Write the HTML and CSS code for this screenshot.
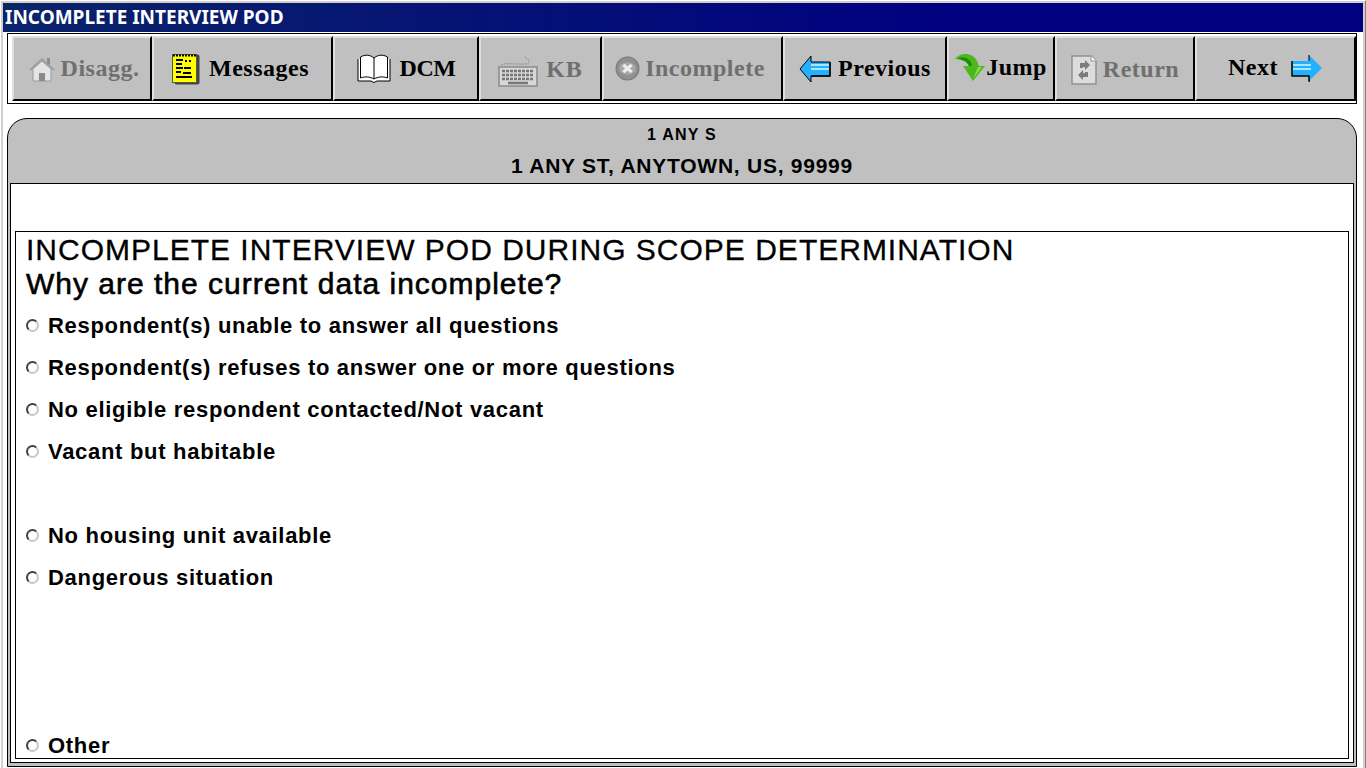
FILE: index.html
```html
<!DOCTYPE html>
<html lang="en">

<head>
  <meta charset="UTF-8">
  <title>INCOMPLETE INTERVIEW POD</title>
  <link rel="stylesheet" href="styles.css">
</head>

<body>
  <div class="window">
    <div class="titlebar">INCOMPLETE INTERVIEW POD</div>
    <div class="content">
      <div class="toolbar">
        <button class="btn btn-disagg off">
          <svg width="26" height="26" viewBox="0 0 26 26">
            <path d="M18 2h3v9h-3z" fill="#8c8c8c"/>
            <path d="M4 13v12h18V13L13 5z" fill="#e4e4e4" stroke="#999"/>
            <path d="M1 14L13 3l12 11" fill="none" stroke="#a0a0a0" stroke-width="2"/>
            <path d="M10 17h6v8h-6z" fill="#8a8a8a"/>
          </svg>
          <span>Disagg.</span>
        </button>
        <button class="btn btn-messages">
          <svg width="28" height="32" viewBox="0 0 28 32">
            <rect x="2.500" y="1.500" width="25" height="30" rx="2" fill="#444"/>
            <rect x="0.500" y="1.500" width="24" height="28" fill="#ffff00" stroke="#555"/>
            <path d="M1 2.500h23" stroke="#000" stroke-width="2" stroke-dasharray="2 1"/>
            <path d="M4 7h7M13 8h2M17 8h2M4 11h6M4 15h7M12 15h7M4 19h5M11 20h8M4 24h16" stroke="#000" stroke-width="2"/>
          </svg>
          <span>Messages</span>
        </button>
        <button class="btn btn-dcm">
          <svg width="34" height="29" viewBox="0 0 34 29">
            <path d="M1 5v22h13l3 1.500 3-1.500h13V5" fill="#fff" stroke="#000"/>
            <path d="M3.500 24V3c5-3 10-2 13.500 1 3.500-3 8.500-4 13.500-1v21c-5-2-10-1-13.500 1-3.500-2-8.500-3-13.500-1z" fill="#fff" stroke="#000"/>
            <path d="M17 4v21" stroke="#000"/>
          </svg>
          <span>DCM</span>
        </button>
        <button class="btn btn-kb off">
          <svg width="40" height="36" viewBox="0 0 40 36">
            <path d="M3 13C6 11 12 12 20 12c6 0 11 1 11-3 0-2-4-2-4-5" fill="none" stroke="#8a8a8a" stroke-dasharray="2 1"/>
            <rect x="1" y="15" width="38" height="19" fill="#d8d8d8" stroke="#8a8a8a" stroke-width="1.500"/>
            <path d="M4 19h32M4 23h32M4 27h32" stroke="#777" stroke-width="2.500" stroke-dasharray="3 1"/>
            <path d="M10 31h20" stroke="#777" stroke-width="2.500"/>
          </svg>
          <span>KB</span>
        </button>
        <button class="btn btn-incomplete off">
          <svg width="25" height="25" viewBox="0 0 24 24">
            <circle cx="12" cy="12" r="11" fill="#8f8f8f" stroke="#777"/>
            <ellipse cx="12" cy="12" rx="8" ry="6" fill="#a8a8a8"/>
            <path d="M8 8.500l8 7M16 8.500l-8 7" stroke="#eee" stroke-width="3"/>
          </svg>
          <span>Incomplete</span>
        </button>
        <button class="btn btn-previous">
          <svg width="32" height="28" viewBox="0 0 32 28">
            <path d="M12 1L1 14l11 13v-6h19V7H12z" fill="#22b0ff" stroke="#000"/>
            <path d="M12 10h18M12 14h18" stroke="#a8e6ff" stroke-width="2"/>
            <path d="M31 7v14H12" fill="none" stroke="#000" stroke-width="1.500"/>
          </svg>
          <span>Previous</span>
        </button>
        <button class="btn btn-jump">
          <svg width="31" height="29" viewBox="0 0 31 29">
            <path d="M0 6C5-1 18-1 22 8l2 5h6L18 28 8 13h6C12 8 6 6 0 6z" fill="#4cb81e"/>
            <path d="M2 6c5-3 11-2 14 3l1 4h-3C12 8 6 6 2 6z" fill="#1f8c0c"/>
            <path d="M18 26l9-12h-4z" fill="#8ad84a"/>
          </svg>
          <span>Jump</span>
        </button>
        <button class="btn btn-return off">
          <svg width="26" height="30" viewBox="0 0 26 30">
            <path d="M1 1h19l5 5v23H1z" fill="#dcdcdc" stroke="#909090" stroke-width="1.500"/>
            <path d="M20 1v5h5" fill="#fff" stroke="#909090"/>
            <path d="M9 13V8h5V5l5 5-5 5v-3h-2v1zM17 17v5h-5v3l-5-5 5-5v3h2v-1z" fill="#7c7c7c"/>
          </svg>
          <span>Return</span>
        </button>
        <button class="btn btn-next">
          <span>Next</span>
          <svg width="32" height="28" viewBox="0 0 32 28">
            <path d="M18 1l13 13-13 13v-5H1V7h17z" fill="#22b0ff"/>
            <path d="M2 11h18M2 15h18" stroke="#a8e6ff" stroke-width="2"/>
            <path d="M1 7v15h17v5l1 0" fill="none" stroke="#000" stroke-width="1.500"/>
            <path d="M18 7V1" stroke="#000"/>
          </svg>
        </button>
      </div>

      <div class="panel">
        <div class="panel-head">
          <div class="case-id">1 ANY S</div>
          <div class="address">1 ANY ST, ANYTOWN, US, 99999</div>
        </div>
        <div class="panel-body">
          <div class="question">
            <h1>INCOMPLETE INTERVIEW POD DURING SCOPE DETERMINATION</h1>
            <h2>Why are the current data incomplete?</h2>
            <div class="options">
              <label class="option"><input type="radio" name="why"><span>Respondent(s) unable to answer all questions</span></label>
              <label class="option"><input type="radio" name="why"><span>Respondent(s) refuses to answer one or more questions</span></label>
              <label class="option"><input type="radio" name="why"><span>No eligible respondent contacted/Not vacant</span></label>
              <label class="option"><input type="radio" name="why"><span>Vacant but habitable</span></label>
              <div class="option"></div>
              <label class="option"><input type="radio" name="why"><span>No housing unit available</span></label>
              <label class="option"><input type="radio" name="why"><span>Dangerous situation</span></label>
              <div class="option"></div>
              <div class="option"></div>
              <div class="option"></div>
              <label class="option"><input type="radio" name="why"><span>Other</span></label>
            </div>
          </div>
        </div>
      </div>
    </div>
  </div>
</body>

</html>
```

FILE: styles.css
```css
html,
body {
  margin: 0;
  height: 100%;
  overflow: hidden;
}

body {
  background: #d4d0c8;
  font-family: 'Liberation Sans', Arial, sans-serif;
}

.window {
  box-sizing: border-box;
  height: 768px;
  border-left: 1px solid #fff;
  border-right: 1px solid #808080;
  border-top: 1px solid #fff;
  padding: 2px 2px 0;
  display: flex;
  flex-direction: column;
}

.titlebar {
  height: 29px;
  flex: none;
  line-height: 29px;
  padding-left: 2px;
  background: linear-gradient(to right, #0a246a, #000080 70%);
  color: #fff;
  font-family: 'Noto Sans', sans-serif;
  font-size: 19px;
  font-weight: 700;
  white-space: nowrap;
}

.content {
  flex: 1;
  background: #fff;
  padding: 1px 6px 1px 4px;
  display: flex;
  flex-direction: column;
  min-height: 0;
}

/* toolbar */
.toolbar {
  box-sizing: border-box;
  height: 71px;
  flex: none;
  border: 1px solid #000;
  padding: 2px 0 0 4px;
  display: flex;
  margin-bottom: 14px;
}

.btn {
  box-sizing: border-box;
  height: 65px;
  padding: 0;
  background: #c0c0c0;
  border: 2px solid;
  border-color: #dedede #000 #000 #dedede;
  font-family: 'Liberation Serif', 'Times New Roman', serif;
  font-size: 24px;
  font-weight: 700;
  letter-spacing: 0.5px;
  color: #000;
  display: flex;
  align-items: center;
  justify-content: center;
  white-space: nowrap;
}

.btn.off {
  color: #6f6f6f;
}

.btn-disagg { width: 140px; gap: 6px; padding-left: 4px; }
.btn-messages { width: 181px; gap: 9px; padding-right: 4px; }
.btn-dcm { width: 146px; gap: 9px; letter-spacing: -0.5px; }
.btn-kb { width: 123px; gap: 8px; letter-spacing: 1px; padding-top: 2px; }
.btn-incomplete { width: 181px; gap: 5px; padding-right: 5px; }
.btn-previous { width: 164px; gap: 7px; }
.btn-jump { width: 108px; gap: 0; padding-bottom: 2px; }
.btn-return { width: 140px; gap: 6px; padding-top: 2px; }
.btn-next { width: 161px; gap: 13px; padding-bottom: 2px; }

/* panel */
.panel {
  flex: 1;
  min-height: 0;
  box-sizing: border-box;
  background: #c0c0c0;
  border: 1px solid #000;
  border-radius: 20px 20px 0 0;
  padding: 0 2px 3px;
  display: flex;
  flex-direction: column;
}

.panel-head {
  height: 64px;
  flex: none;
  text-align: center;
  font-weight: 700;
  color: #000;
}

.case-id {
  font-size: 16px;
  line-height: 18px;
  padding-top: 7px;
  letter-spacing: 1.2px;
}

.address {
  font-size: 21px;
  line-height: 24px;
  margin-top: 10px;
  letter-spacing: 0.75px;
}

.panel-body {
  flex: 1;
  min-height: 0;
  background: #fff;
  border: 1px solid #000;
  padding: 47px 4px 3px 4px;
  display: flex;
}

.question {
  flex: 1;
  border: 1px solid #000;
  padding: 0 0 0 10px;
  overflow: hidden;
}

.question h1 {
  margin: 1px 0 0;
  font-size: 30px;
  font-weight: 400;
  line-height: 34px;
  letter-spacing: 1px;
  white-space: nowrap;
  -webkit-text-stroke: 0.3px #000;
}

.question h2 {
  margin: 0;
  font-size: 30px;
  font-weight: 400;
  line-height: 34px;
  letter-spacing: 1px;
  white-space: nowrap;
  -webkit-text-stroke: 0.6px #000;
}

.options {
  display: grid;
  grid-auto-rows: 42px;
  margin-top: 3px;
}

.option {
  display: flex;
  align-items: center;
  font-size: 22px;
  font-weight: 700;
  letter-spacing: 0.7px;
}

.option span {
  padding-top: 2px;
}

.option input {
  appearance: none;
  box-sizing: border-box;
  width: 13px;
  height: 13px;
  margin: 0 9px 0 0;
  border: 2px solid;
  border-color: #404040 #c8c8c8 #c8c8c8 #404040;
  border-radius: 50%;
  background: #fff;
}
```
